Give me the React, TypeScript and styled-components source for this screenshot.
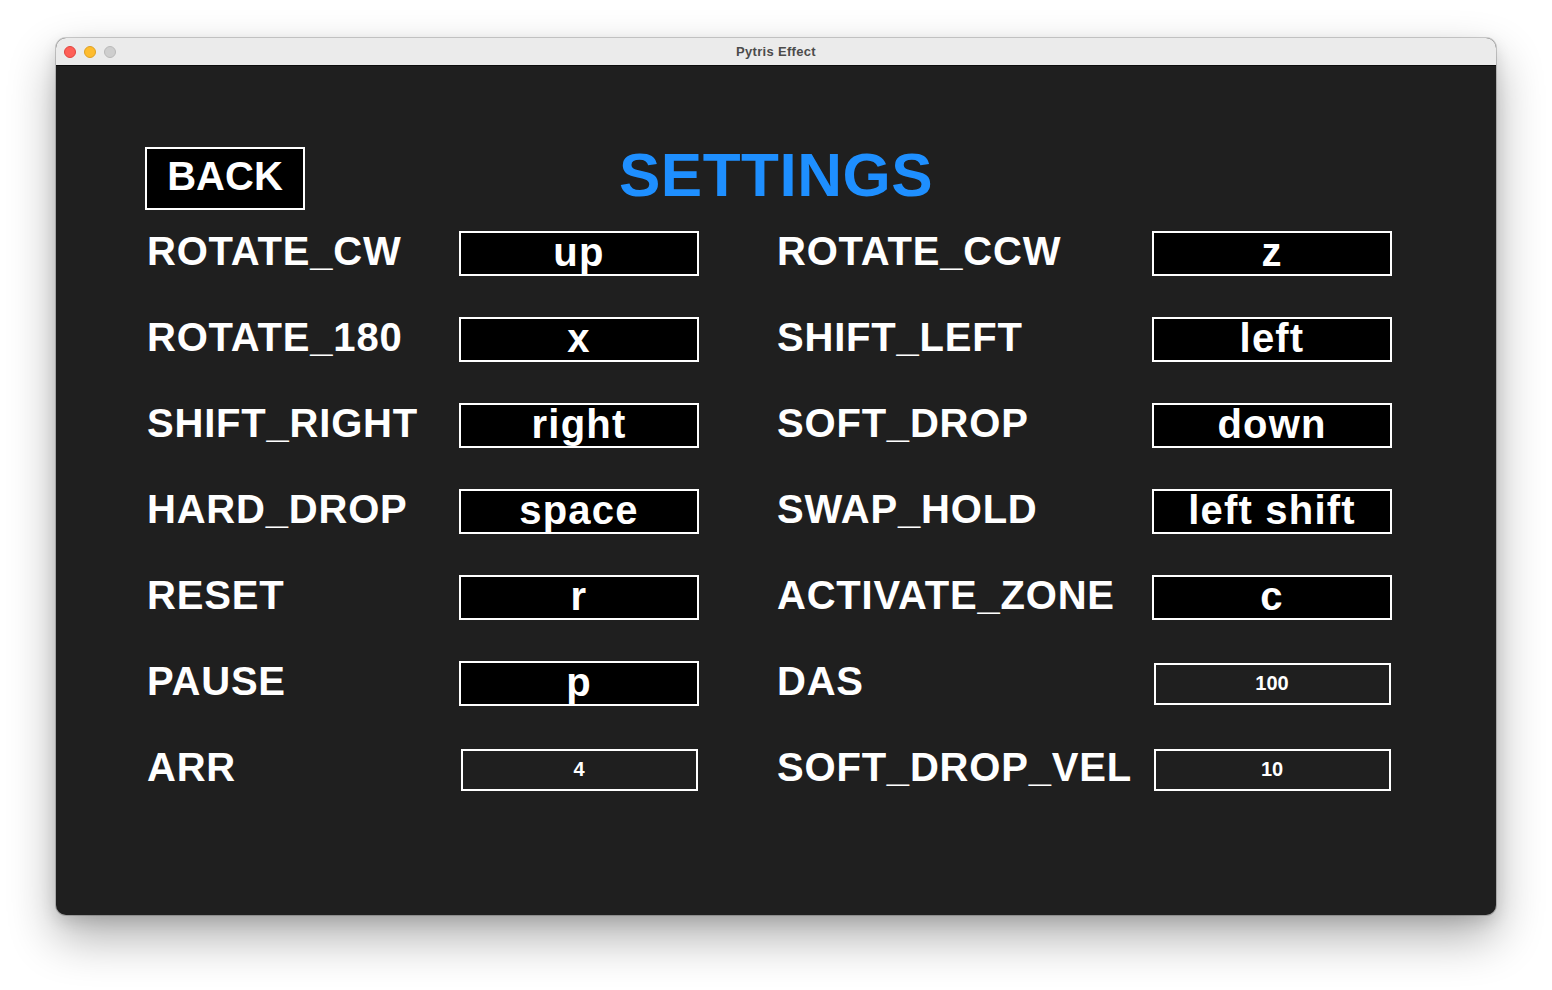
import React from "react";
import styled, { createGlobalStyle } from "styled-components";

const Global = createGlobalStyle`
  html, body { margin: 0; padding: 0; background: #ffffff; }
  body { font-family: "Liberation Sans", Arial, sans-serif; }
  * { box-sizing: border-box; }
`;

const Page = styled.div`
  width: 1552px;
  height: 990px;
  padding: 38px 0 0 56px;
  background: #ffffff;
`;

const Window = styled.div`
  width: 1440px;
  height: 877px;
  border-radius: 10px;
  overflow: hidden;
  display: flex;
  flex-direction: column;
  background: #1f1f1f;
  box-shadow: 0 0 0 1px rgba(0, 0, 0, 0.18), 0 22px 48px rgba(0, 0, 0, 0.32),
    0 6px 16px rgba(0, 0, 0, 0.12);
`;

const TitleBar = styled.div`
  height: 28px;
  flex: none;
  display: grid;
  grid-template-columns: 1fr auto 1fr;
  align-items: center;
  padding: 0 8px;
  background: #ebebeb;
  border-bottom: 1px solid #0c0c0c;
`;

const Lights = styled.div`
  display: flex;
  gap: 8px;
  align-items: center;
`;

const Light = styled.span<{ $fill: string; $edge: string }>`
  width: 12px;
  height: 12px;
  border-radius: 50%;
  background: ${(p) => p.$fill};
  border: 0.5px solid ${(p) => p.$edge};
`;

const WindowTitle = styled.div`
  font-family: "Liberation Sans", Arial, sans-serif;
  font-weight: 700;
  font-size: 13px;
  letter-spacing: 0.3px;
  color: #4b4b4b;
`;

const Content = styled.div`
  flex: 1;
  padding: 81px 89px 0 89px;
  display: flex;
  flex-direction: column;
`;

const Header = styled.div`
  display: grid;
  grid-template-columns: 1fr auto 1fr;
  align-items: start;
  height: 63px;
`;

const BackButton = styled.div`
  justify-self: start;
  width: 160px;
  height: 63px;
  border: 2px solid #ffffff;
  background: #000000;
  color: #ffffff;
  font-family: "Liberation Sans", Arial, sans-serif;
  font-weight: 700;
  font-size: 40px;
  line-height: 55px;
  text-align: center;
`;

const Title = styled.h1`
  margin: 0;
  color: #1e8fff;
  font-family: "Liberation Sans", Arial, sans-serif;
  font-weight: 700;
  font-size: 62px;
  line-height: 56px;
  letter-spacing: 0.5px;
`;

const Columns = styled.div`
  margin-top: 21px;
  display: flex;
  gap: 76px;
`;

const Column = styled.div<{ $labelWidth: number }>`
  display: grid;
  grid-template-columns: ${(p) => p.$labelWidth}px 240px;
  grid-auto-rows: 45px;
  row-gap: 41px;
`;

const Label = styled.div`
  color: #ffffff;
  font-family: "Liberation Sans", Arial, sans-serif;
  font-weight: 700;
  font-size: 40px;
  line-height: 41px;
  letter-spacing: 0.8px;
  padding-left: 2px;
  white-space: nowrap;
`;

const KeyBox = styled.div`
  border: 2px solid #ffffff;
  background: #000000;
  color: #ffffff;
  font-family: "Liberation Sans", Arial, sans-serif;
  font-weight: 700;
  font-size: 40px;
  line-height: 39px;
  padding-bottom: 2px;
  letter-spacing: 1.2px;
  text-align: center;
  white-space: nowrap;
`;

const NumberBox = styled.div`
  justify-self: center;
  align-self: center;
  width: 237px;
  height: 42px;
  border: 2px solid #ffffff;
  background: transparent;
  color: #ffffff;
  font-family: "Liberation Sans", Arial, sans-serif;
  font-weight: 700;
  font-size: 20px;
  line-height: 37px;
  text-align: center;
`;

type Setting = { name: string; value: string; numeric?: boolean };

const left: Setting[] = [
  { name: "ROTATE_CW", value: "up" },
  { name: "ROTATE_180", value: "x" },
  { name: "SHIFT_RIGHT", value: "right" },
  { name: "HARD_DROP", value: "space" },
  { name: "RESET", value: "r" },
  { name: "PAUSE", value: "p" },
  { name: "ARR", value: "4", numeric: true },
];

const right: Setting[] = [
  { name: "ROTATE_CCW", value: "z" },
  { name: "SHIFT_LEFT", value: "left" },
  { name: "SOFT_DROP", value: "down" },
  { name: "SWAP_HOLD", value: "left shift" },
  { name: "ACTIVATE_ZONE", value: "c" },
  { name: "DAS", value: "100", numeric: true },
  { name: "SOFT_DROP_VEL", value: "10", numeric: true },
];

const SettingsColumn: React.FC<{ items: Setting[]; labelWidth: number }> = ({
  items,
  labelWidth,
}) => (
  <Column $labelWidth={labelWidth}>
    {items.map((s) => (
      <React.Fragment key={s.name}>
        <Label>{s.name}</Label>
        {s.numeric ? <NumberBox>{s.value}</NumberBox> : <KeyBox>{s.value}</KeyBox>}
      </React.Fragment>
    ))}
  </Column>
);

export default function App() {
  return (
    <>
      <Global />
      <Page>
        <Window>
          <TitleBar>
            <Lights>
              <Light $fill="#fe5f57" $edge="#e0443e" />
              <Light $fill="#febc2e" $edge="#dea123" />
              <Light $fill="#cecece" $edge="#b9b9b9" />
            </Lights>
            <WindowTitle>Pytris Effect</WindowTitle>
            <div />
          </TitleBar>
          <Content>
            <Header>
              <BackButton>BACK</BackButton>
              <Title>SETTINGS</Title>
              <div />
            </Header>
            <Columns>
              <SettingsColumn items={left} labelWidth={314} />
              <SettingsColumn items={right} labelWidth={377} />
            </Columns>
          </Content>
        </Window>
      </Page>
    </>
  );
}
